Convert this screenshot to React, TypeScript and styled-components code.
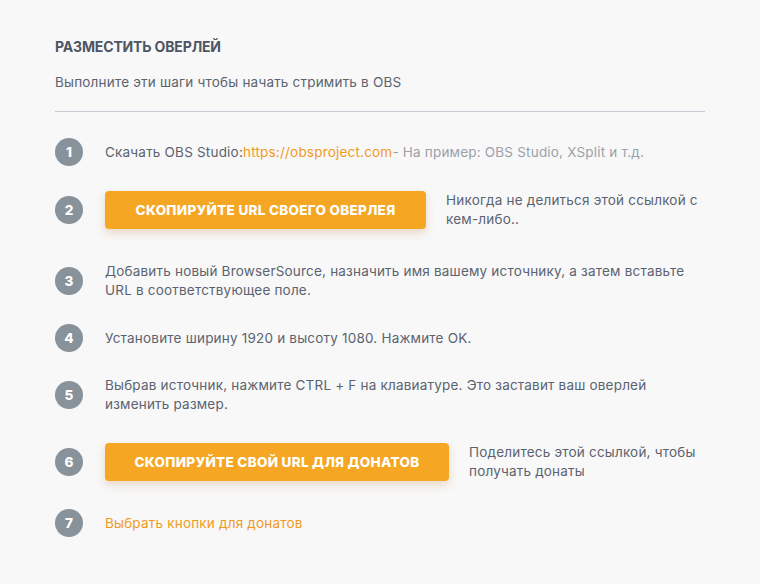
import React from "react";
import styled, { createGlobalStyle } from "styled-components";

const Global = createGlobalStyle`
  html, body { margin: 0; padding: 0; background: #f8f8f8; }
  body { font-family: Inter, "Noto Sans", sans-serif; color: #5b6370; }
`;

const Page = styled.div`
  padding: 38px 55px 40px 55px;
  width: 650px;
`;

const Title = styled.h2`
  margin: 0;
  font-size: 14px;
  font-weight: 700;
  letter-spacing: -0.15px;
  color: #4d5563;
  line-height: 18px;
`;

const Subtitle = styled.p`
  margin: 17px 0 0 0;
  font-size: 13.5px;
  letter-spacing: 0.2px;
  line-height: 18px;
  color: #5b6370;
`;

const Divider = styled.hr`
  margin: 20px 0 0 0;
  border: 0;
  border-top: 1px solid #c6ccd4;
`;

const Steps = styled.ol`
  list-style: none;
  margin: 26px 0 0 0;
  padding: 0;
  display: flex;
  flex-direction: column;
`;

const Step = styled.li<{ $gap: number }>`
  display: grid;
  grid-template-columns: 28px 1fr;
  column-gap: 22px;
  align-items: center;
  margin-top: ${(p) => p.$gap}px;
`;

const Num = styled.span`
  width: 28px;
  height: 28px;
  border-radius: 50%;
  background: #87929b;
  color: #fff;
  font-weight: 800;
  font-size: 13.5px;
  display: flex;
  align-items: center;
  justify-content: center;
`;

const Text = styled.div`
  font-size: 13.5px;
  letter-spacing: 0.2px;
  line-height: 19px;
  color: #5b6370;
`;

const Muted = styled.span`
  color: #9aa1ab;
`;

const Link = styled.a`
  color: #f29a1c;
  text-decoration: none;
`;

const ActionRow = styled.div`
  display: flex;
  align-items: center;
  gap: 20px;
`;

const Button = styled.button<{ $width: number }>`
  width: ${(p) => p.$width}px;
  height: 38px;
  flex: none;
  border: 0;
  border-radius: 4px;
  background: #f5a623;
  color: #fff;
  font-family: inherit;
  font-weight: 800;
  font-size: 13.5px;
  letter-spacing: 0.3px;
  text-transform: uppercase;
  box-shadow: 0 4px 8px rgba(190, 120, 60, 0.25);
  cursor: pointer;
`;

const Side = styled(Text)`
  flex: 1;
`;

export default function App() {
  return (
    <>
      <Global />
      <Page>
        <Title>РАЗМЕСТИТЬ ОВЕРЛЕЙ</Title>
        <Subtitle>Выполните эти шаги чтобы начать стримить в OBS</Subtitle>
        <Divider />
        <Steps>
          <Step $gap={0}>
            <Num>1</Num>
            <Text>
              Скачать OBS Studio:<Link href="#">https://obsproject.com</Link>
              <Muted>- На пример: OBS Studio, XSplit и т.д.</Muted>
            </Text>
          </Step>
          <Step $gap={25}>
            <Num>2</Num>
            <ActionRow>
              <Button $width={321}>Скопируйте URL своего оверлея</Button>
              <Side>Никогда не делиться этой ссылкой с кем-либо..</Side>
            </ActionRow>
          </Step>
          <Step $gap={33}>
            <Num>3</Num>
            <Text>
              Добавить новый BrowserSource, назначить имя вашему источнику, а затем вставьте URL в
              соответствующее поле.
            </Text>
          </Step>
          <Step $gap={24}>
            <Num>4</Num>
            <Text>Установите ширину 1920 и высоту 1080. Нажмите OK.</Text>
          </Step>
          <Step $gap={24}>
            <Num>5</Num>
            <Text>
              Выбрав источник, нажмите CTRL + F на клавиатуре. Это заставит ваш оверлей изменить
              размер.
            </Text>
          </Step>
          <Step $gap={29}>
            <Num>6</Num>
            <ActionRow>
              <Button $width={344}>Скопируйте свой URL для донатов</Button>
              <Side>Поделитесь этой ссылкой, чтобы получать донаты</Side>
            </ActionRow>
          </Step>
          <Step $gap={28}>
            <Num>7</Num>
            <Text>
              <Link href="#">Выбрать кнопки для донатов</Link>
            </Text>
          </Step>
        </Steps>
      </Page>
    </>
  );
}
